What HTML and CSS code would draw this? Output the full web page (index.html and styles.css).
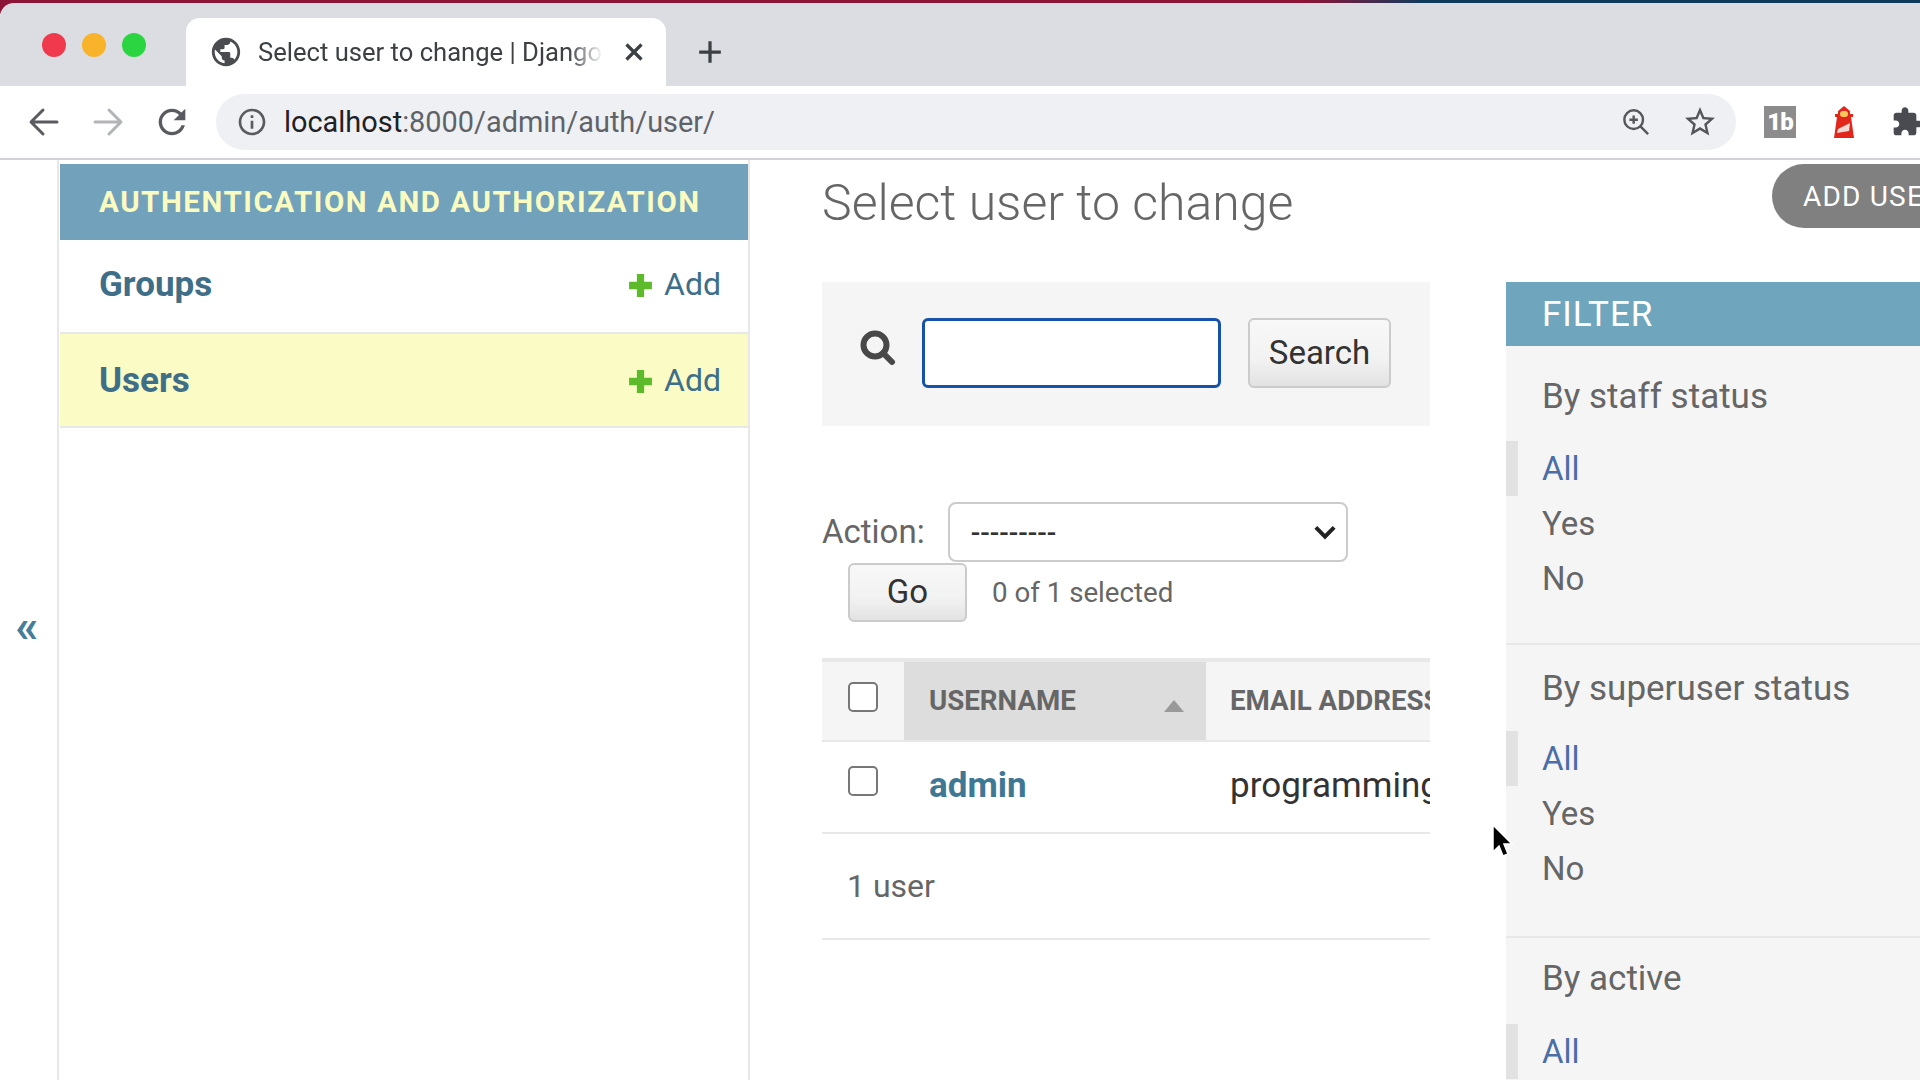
FILE: index.html
```html
<!DOCTYPE html>
<html>
<head>
  <meta charset="utf-8">
  <title>Select user to change | Django</title>
  <link rel="stylesheet" href="styles.css">
</head>
<body>
<!-- browser chrome -->
<div class="tabbar">
  <div class="lights">
    <span class="light light-red"></span>
    <span class="light light-orange"></span>
    <span class="light light-green"></span>
  </div>
  <div class="tab">
    <svg class="globe" viewBox="0 0 24 24"><path d="M12 2C6.48 2 2 6.48 2 12s4.48 10 10 10 10-4.48 10-10S17.52 2 12 2zm-1 17.93c-3.95-.49-7-3.85-7-7.93 0-.62.08-1.21.21-1.79L9 15v1c0 1.1.9 2 2 2v1.93zm6.9-2.54c-.26-.81-1-1.39-1.9-1.39h-1v-3c0-.55-.45-1-1-1H8v-2h2c.55 0 1-.45 1-1V7h2c1.1 0 2-.9 2-2v-.41c2.93 1.19 5 4.06 5 7.41 0 2.08-.8 3.97-2.1 5.39z"/></svg>
    <span class="tab-title">Select user to change | Django administration</span>
    <svg class="tab-close" viewBox="0 0 16 16"><path d="M2 2l12 12M14 2L2 14"/></svg>
  </div>
  <svg class="tab-new" viewBox="0 0 24 24"><path d="M12 2v20M2 12h20"/></svg>
</div>
<div class="toolbar">
  <svg class="nav-icon" viewBox="0 0 40 40"><path d="M33 20H8M19 8L7 20l12 12"/></svg>
  <svg class="nav-icon nav-off" viewBox="0 0 40 40"><path d="M7 20h25M21 8l12 12-12 12"/></svg>
  <svg class="nav-reload" viewBox="0 0 24 24"><path d="M17.65 6.35C16.2 4.9 14.21 4 12 4c-4.42 0-7.99 3.58-7.99 8s3.57 8 7.99 8c3.73 0 6.84-2.55 7.73-6h-2.08c-.82 2.33-3.04 4-5.65 4-3.31 0-6-2.69-6-6s2.69-6 6-6c1.66 0 3.14.69 4.22 1.78L13 11h7V4l-2.35 2.35z"/></svg>
  <div class="urlbar">
    <svg class="url-info" viewBox="0 0 24 24"><path d="M11 7h2v2h-2zm0 4h2v6h-2zm1-9C6.48 2 2 6.48 2 12s4.48 10 10 10 10-4.48 10-10S17.52 2 12 2zm0 18c-4.41 0-8-3.59-8-8s3.59-8 8-8 8 3.59 8 8-3.59 8-8 8z"/></svg>
    <span class="url-text"><b>localhost</b>:8000/admin/auth/user/</span>
    <svg class="url-zoom" viewBox="0 0 30 30"><circle cx="12.500" cy="12.500" r="10"/><path d="M19.500 19.500L28 28M12.500 8v9M8 12.500h9"/></svg>
    <svg class="url-star" viewBox="0 0 24 24"><path d="M22 9.240l-7.190-.62L12 2 9.190 8.630 2 9.240l5.460 4.730L5.820 21 12 17.270 18.180 21l-1.630-7.030L22 9.240zM12 15.400l-3.760 2.270 1-4.280-3.320-2.880 4.380-.38L12 6.100l1.710 4.040 4.380.38-3.320 2.880 1 4.280L12 15.400z"/></svg>
  </div>
  <span class="ext-tb">1b</span>
  <svg class="ext-light" viewBox="0 0 22 32">
    <path fill="#e2261c" d="M11 0l6 5v3h3v3h-2l3 21H1L4 11H2V8h3V5z"/>
    <rect fill="#f6c95c" x="7" y="5" width="8" height="6" rx="3"/>
    <path fill="#f4d8d4" d="M5 23l12-6-1 8-12 2z"/>
  </svg>
  <svg class="ext-puzzle" viewBox="0 0 24 24"><path d="M20.500 11H19V7c0-1.100-.9-2-2-2h-4V3.500C13 2.120 11.880 1 10.500 1S8 2.120 8 3.500V5H4c-1.100 0-1.990.9-1.990 2v3.800H3.500c1.490 0 2.700 1.210 2.700 2.700s-1.210 2.700-2.700 2.700H2V20c0 1.100.9 2 2 2h3.800v-1.500c0-1.490 1.210-2.700 2.700-2.700 1.490 0 2.700 1.210 2.700 2.700V22H17c1.100 0 2-.9 2-2v-4h1.500c1.380 0 2.500-1.120 2.500-2.500S21.880 11 20.500 11z"/></svg>
</div>

<!-- django admin page -->
<div class="page">
  <div class="toggle">&laquo;</div>

  <nav class="sidebar">
    <div class="app-caption">AUTHENTICATION AND AUTHORIZATION</div>
    <div class="model-row">
      <a class="model-name">Groups</a>
      <a class="model-add"><svg viewBox="0 0 26 26"><path d="M13 2v22M2 13h22"/></svg>Add</a>
    </div>
    <div class="model-row model-current">
      <a class="model-name">Users</a>
      <a class="model-add"><svg viewBox="0 0 26 26"><path d="M13 2v22M2 13h22"/></svg>Add</a>
    </div>
  </nav>

  <main class="content">
    <h1>Select user to change</h1>
    <div class="searchbar">
      <svg class="search-icon" viewBox="0 0 36 36"><circle cx="15" cy="15" r="11.500"/><path d="M23 23l9 9"/></svg>
      <input class="search-input" type="text">
      <button class="btn btn-search">Search</button>
    </div>

    <div class="action-row">
      <label>Action:</label>
      <div class="select"><span>---------</span><svg viewBox="0 0 20 14"><path d="M2 3l8 8 8-8"/></svg></div>
    </div>
    <div class="go-row">
      <button class="btn btn-go">Go</button>
      <span class="counter">0 of 1 selected</span>
    </div>

    <div class="table-clip">
      <table class="results">
        <thead>
          <tr>
            <th class="col-check"><input class="check" type="checkbox"></th>
            <th class="col-user"><div class="th-inner">USERNAME<span class="sort-up"></span></div></th>
            <th class="col-email">EMAIL ADDRESS</th>
          </tr>
        </thead>
        <tbody>
          <tr>
            <td class="col-check"><input class="check" type="checkbox"></td>
            <td class="cell-user"><a>admin</a></td>
            <td class="cell-email">programming@example.com</td>
          </tr>
        </tbody>
      </table>
    </div>
    <div class="paginator">1 user</div>
  </main>

  <aside class="filter">
    <a class="add-user">ADD USER</a>
    <h2>FILTER</h2>
    <section class="filter-group">
      <h3>By staff status</h3>
      <ul>
        <li class="selected">All</li>
        <li>Yes</li>
        <li>No</li>
      </ul>
    </section>
    <section class="filter-group">
      <h3>By superuser status</h3>
      <ul>
        <li class="selected">All</li>
        <li>Yes</li>
        <li>No</li>
      </ul>
    </section>
    <section class="filter-group">
      <h3>By active</h3>
      <ul>
        <li class="selected">All</li>
      </ul>
    </section>
  </aside>
</div>

<!-- mouse pointer, it sits over the page -->
<svg class="pointer" viewBox="0 0 22 34"><path d="M2 1v27l6-6 4 10 5-2-4-10h8z" fill="#000" stroke="#fff" stroke-width="1.500"/></svg>
</body>
</html>
```

FILE: styles.css
```css
/* Reset */
*{
  box-sizing: border-box;
}
html,body{
  margin: 0;
  height: 100%;
  overflow: hidden;
}
body{
  position: relative;
  background: #fff;
  font-family: Roboto, "Liberation Sans", sans-serif;
  color: #666;
  border-top: 3px solid transparent;
  background-image: linear-gradient(90deg, #8c1436 0%, #8c1436 68%, #123a5c 74%, #123a5c 100%);
  background-size: 100% 14px;
  background-repeat: no-repeat;
  background-origin: border-box;
  background-color: #fff;
}

/* Tab strip */
.tabbar{
  height: 83px;
  display: flex;
  align-items: flex-end;
  background: #dcdde2;
  border-top-left-radius: 14px;
}
.lights{
  width: 186px;
  height: 83px;
  display: flex;
  gap: 16px;
  padding: 30px 0 0 42px;
}
.light{
  width: 24px;
  height: 24px;
  border-radius: 50%;
}
.light-red{ background: #f0394d; }
.light-orange{ background: #f9b32a; }
.light-green{ background: #2bd541; }
.tab{
  width: 480px;
  height: 68px;
  background: #fff;
  border-radius: 14px 14px 0 0;
  display: flex;
  align-items: center;
  padding: 0 0 0 23px;
}
.globe{
  width: 34px;
  height: 34px;
  fill: #4b4c50;
  flex: none;
}
.tab-title{
  width: 345px;
  margin-left: 15px;
  font-size: 25.600px;
  white-space: nowrap;
  overflow: hidden;
  color: #3c4043;
  -webkit-mask-image: linear-gradient(90deg, #000 90%, transparent 100%);
  mask-image: linear-gradient(90deg, #000 90%, transparent 100%);
}
.tab-close{
  width: 20px;
  height: 20px;
  margin-left: 21px;
  flex: none;
  fill: none;
  stroke: #3c4043;
  stroke-width: 2.600;
}
.tab-new{
  width: 26px;
  height: 26px;
  margin: 0 0 21px 31px;
  fill: none;
  stroke: #3c4043;
  stroke-width: 3;
}

/* Toolbar */
.toolbar{
  height: 74px;
  display: flex;
  align-items: center;
  background: #fff;
  border-bottom: 2px solid #d2d3da;
  padding: 0 0 0 24px;
}
.nav-icon{
  width: 40px;
  height: 40px;
  margin-right: 24px;
  flex: none;
  fill: none;
  stroke: #5a5b60;
  stroke-width: 3;
  stroke-linecap: round;
  stroke-linejoin: round;
}
.nav-off{
  stroke: #b3b4b8;
}
.nav-reload{
  width: 40px;
  height: 40px;
  margin-right: 24px;
  flex: none;
  fill: #5a5b60;
}
.urlbar{
  width: 1520px;
  height: 56px;
  border-radius: 28px;
  background: #eff0f3;
  display: flex;
  align-items: center;
  padding: 0 18px 0 20px;
  flex: none;
}
.url-info{
  width: 32px;
  height: 32px;
  fill: #5a5b60;
  flex: none;
}
.url-text{
  margin-left: 16px;
  font-size: 28.900px;
  color: #5f6368;
  flex: 1;
}
.url-text b{
  font-weight: 400;
  color: #202124;
}
.url-zoom{
  width: 28px;
  height: 28px;
  fill: none;
  stroke: #55565b;
  stroke-width: 2.600;
}
.url-star{
  width: 36px;
  height: 36px;
  margin-left: 32px;
  fill: #55565b;
}
.ext-tb{
  width: 32px;
  height: 32px;
  margin-left: 28px;
  flex: none;
  background: #8c8c8c;
  color: #fff;
  font-size: 24px;
  font-weight: 900;
  letter-spacing: -1px;
  line-height: 32px;
  text-align: center;
}
.ext-light{
  width: 22px;
  height: 32px;
  margin-left: 37px;
  flex: none;
}
.ext-puzzle{
  width: 32px;
  height: 32px;
  margin-left: 36px;
  flex: none;
  fill: #4a4b50;
}

/* Page */
.page{
  display: flex;
  height: 920px;
  overflow: hidden;
  background: #fff;
}
.toggle{
  width: 59px;
  margin-right: 1px;
  flex: none;
  display: flex;
  align-items: center;
  justify-content: center;
  padding: 12px 3px 0 0;
  font-size: 46px;
  font-weight: 700;
  color: #447e9b;
  border-right: 2px solid #e8e8e8;
}
.sidebar{
  width: 690px;
  flex: none;
  padding-top: 4px;
  border-right: 2px solid #e8e8e8;
}
.app-caption{
  height: 76px;
  padding-left: 39px;
  background: #71a1bb;
  color: #f9fbc0;
  font-size: 29.500px;
  font-weight: 700;
  letter-spacing: 1.550px;
  line-height: 76px;
  white-space: nowrap;
}
.model-row{
  height: 94px;
  display: flex;
  align-items: center;
  justify-content: space-between;
  padding: 0 27px 4px 39px;
  border-bottom: 2px solid #e8e8e8;
  color: #3f6f88;
}
.model-current{
  height: 94px;
  padding-bottom: 0;
  background: #fbfcc5;
}
.model-name{
  font-size: 35px;
  font-weight: 700;
}
.model-add{
  display: flex;
  align-items: center;
  gap: 10px;
  font-size: 32px;
}
.model-add svg{
  width: 27px;
  height: 27px;
  margin-top: 3px;
  fill: none;
  stroke: #5cba2b;
  stroke-width: 7;
}

/* Main column */
.content{
  width: 608px;
  margin-left: 72px;
  flex: none;
}
h1{
  margin: 0 0 38px;
  height: 84px;
  font-size: 50px;
  font-weight: 300;
  line-height: 86px;
  color: #666;
}
.searchbar{
  height: 144px;
  display: flex;
  align-items: center;
  padding: 0 0 2px 38px;
  background: #f5f5f6;
}
.search-icon{
  width: 36px;
  height: 36px;
  margin: -10px 26px 0 0;
  flex: none;
  fill: none;
  stroke: #484848;
  stroke-width: 6;
  stroke-linecap: round;
}
.search-input{
  width: 299px;
  height: 70px;
  border: 3px solid #1552a8;
  border-radius: 6px;
  background: #fff;
  outline: none;
}
.btn{
  border: 2px solid #cbcbcb;
  border-radius: 6px;
  background: linear-gradient(180deg, #f8f8f8 0%, #f2f2f2 60%, #e2e2e2 100%);
  color: #333;
  font-family: inherit;
  font-size: 33px;
  padding: 0 0 2px;
}
.btn-search{
  width: 143px;
  height: 70px;
  margin-left: 27px;
}
.action-row{
  margin-top: 76px;
  display: flex;
  align-items: center;
  gap: 23px;
  font-size: 33px;
}
.action-row label{
  margin-top: -2px;
}
.select{
  width: 400px;
  height: 60px;
  border: 2px solid #ccc;
  border-radius: 8px;
  background: #fff;
  display: flex;
  align-items: center;
  justify-content: space-between;
  padding: 0 9px 0 21px;
  color: #333;
  font-size: 28px;
  font-weight: 500;
}
.select svg{
  width: 24px;
  height: 16px;
  fill: none;
  stroke: #222;
  stroke-width: 3.500;
}
.go-row{
  margin: 1px 0 0 26px;
  display: flex;
  align-items: center;
  gap: 25px;
}
.btn-go{
  width: 119px;
  height: 59px;
}
.counter{
  font-size: 27.700px;
  color: #666;
}

/* Results table */
.table-clip{
  margin-top: 36px;
  overflow: hidden;
}
.results{
  width: 900px;
  table-layout: fixed;
  border-collapse: separate;
  border-spacing: 0;
}
.results th{
  height: 84px;
  padding: 0 0 2px;
  background: #f5f5f6;
  border-top: 4px solid #e8e8e8;
  border-bottom: 2px solid #e8e8e8;
  color: #666;
  font-size: 27.700px;
  font-weight: 700;
  text-align: left;
  white-space: nowrap;
}
.results td{
  height: 92px;
  padding: 0 0 4px;
  border-bottom: 2px solid #e8e8e8;
}
.col-check{
  width: 82px;
  padding-left: 26px !important;
}
.check{
  display: block;
  -webkit-appearance: none;
  appearance: none;
  width: 30px;
  height: 30px;
  margin: -7px 0 0 0;
  border: 2px solid #777;
  border-radius: 5px;
  background: #fff;
}
td .check{
  margin-top: -8px;
}
.results th.col-user{
  width: 302px;
  background: #ddd;
  padding-left: 25px;
}
.th-inner{
  display: flex;
  align-items: center;
  justify-content: space-between;
  padding-right: 22px;
}
.sort-up{
  width: 0;
  height: 0;
  margin-top: 12px;
  border-left: 10px solid transparent;
  border-right: 10px solid transparent;
  border-bottom: 12px solid #999;
}
.results th.col-email{
  width: 516px;
  padding-left: 24px;
}
.cell-user{
  padding-left: 25px !important;
  font-size: 35px;
  font-weight: 700;
  color: #3f7895;
}
.cell-email{
  padding-left: 24px !important;
  font-size: 35px;
  color: #333;
  white-space: nowrap;
}
.paginator{
  height: 106px;
  padding-left: 25px;
  border-bottom: 2px solid #e8e8e8;
  font-size: 32px;
  line-height: 104px;
  color: #666;
}

/* Filter column */
.filter{
  position: relative;
  width: 414px;
  margin-left: 76px;
  flex: none;
  padding-top: 122px;
}
.add-user{
  position: absolute;
  left: 266px;
  top: 4px;
  width: 200px;
  height: 64px;
  padding-left: 31px;
  border-radius: 32px;
  background: #808080;
  color: #fff;
  font-size: 28px;
  letter-spacing: 1.200px;
  line-height: 66px;
  white-space: nowrap;
}
.filter h2{
  margin: 0;
  height: 64px;
  padding-left: 36px;
  background: #70a6bd;
  color: #fff;
  font-size: 35px;
  font-weight: 400;
  letter-spacing: 1px;
  line-height: 66px;
}
.filter-group{
  padding: 16px 0 40px;
  background: #f5f5f6;
  border-bottom: 2px solid #e8e8e8;
}
.filter-group:nth-of-type(1){
  padding: 26px 0 37px;
}
.filter-group:nth-of-type(2){
  padding-top: 19px;
}
.filter-group h3{
  margin: 0 0 20px;
  padding-left: 36px;
  font-size: 35px;
  font-weight: 400;
  line-height: 50px;
  color: #666;
}
.filter-group:nth-of-type(1) h3{
  margin-bottom: 19px;
}
.filter-group:nth-of-type(2) h3{
  margin-bottom: 17px;
}
.filter-group ul{
  margin: 0;
  padding: 0;
  list-style: none;
}
.filter-group li{
  height: 55px;
  padding-left: 36px;
  font-size: 33px;
  line-height: 55px;
  color: #666;
}
.filter-group li.selected{
  padding-left: 24px;
  border-left: 12px solid #e2e2e2;
  color: #4a6ea5;
}

/* Pointer */
.pointer{
  position: absolute;
  left: 1491px;
  top: 821px;
  width: 22px;
  height: 34px;
}
```
